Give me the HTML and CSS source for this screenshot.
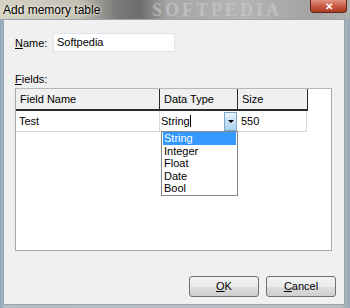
FILE: index.html
```html
<!DOCTYPE html>
<html>
<head>
    <meta http-equiv="Content-Type" content="text/html; charset=UTF-8">
    <link rel="stylesheet" href="styles.css">
</head>
<body>
    <div class="window">
        <div class="titlebar">
            <span class="title">Add memory table</span>
            <span class="watermark">SOFTPEDIA</span>
            <span class="close">&#x2715;</span>
        </div>

        <div class="client">
            <div class="name-row">
                <label class="label"><u>N</u>ame:</label>
                <div class="textbox">Softpedia</div>
            </div>

            <div class="fields-label"><u>F</u>ields:</div>

            <div class="grid">
                <div class="grid-header">
                    <div class="cell col-name">Field Name</div>
                    <div class="cell col-type">Data Type</div>
                    <div class="cell col-size">Size</div>
                </div>
                <div class="grid-row">
                    <div class="cell col-name">Test</div>
                    <div class="cell col-type combo">
                        <span class="combo-text">String<span class="caret"></span></span>
                        <span class="combo-button"><span class="arrow"></span></span>
                    </div>
                    <div class="cell col-size">550</div>
                </div>

                <ul class="dropdown">
                    <li class="selected">String</li>
                    <li>Integer</li>
                    <li>Float</li>
                    <li>Date</li>
                    <li>Bool</li>
                </ul>
            </div>

            <div class="buttons">
                <div class="button"><u>O</u>K</div>
                <div class="button"><u>C</u>ancel</div>
            </div>
        </div>
    </div>
</body>
</html>
```

FILE: styles.css
```css
body {
    margin: 0;
    font-family: "Liberation Sans", Arial, sans-serif;
    font-size: 11px;
    color: #000;
}

.window {
    width: 350px;
    height: 308px;
    display: flex;
    flex-direction: column;
    background: linear-gradient(to right, #8fa3b8 0px, #b4bcc4 4px, #b8bcc0 340px, #9aa8b8 350px);
}

.titlebar {
    position: relative;
    height: 19px;
    display: flex;
    align-items: flex-start;
    background: linear-gradient(to right, #d6d2c6 0%, #c4c0b4 22%, #7c7c7a 33%, #6c6c6c 40%, #a6a6a4 48%, #b4b4b2 70%, #a4a4a4 88%, #b0b0b0 100%);
}

.title {
    padding: 3px 0 0 3px;
    font-size: 12px;
    color: #000;
    text-shadow: 0 0 4px #f0f0e8, 0 0 2px #f0f0e8;
}

.watermark {
    position: absolute;
    left: 152px;
    top: 1px;
    font-family: "Liberation Serif", serif;
    font-weight: bold;
    font-size: 18px;
    line-height: 18px;
    letter-spacing: 3px;
    color: #cfcfcf;
    opacity: 0.55;
}

.close {
    position: absolute;
    left: 310px;
    top: 0;
    width: 37px;
    height: 13px;
    border: 1px solid #5a2a20;
    border-top: none;
    border-radius: 0 0 4px 4px;
    background: linear-gradient(#e29482, #c85a44 50%, #b03a22);
    color: #fff;
    font-size: 10px;
    font-weight: bold;
    line-height: 13px;
    text-align: center;
    box-sizing: border-box;
}

.client {
    flex: 1;
    margin: 0 5px 3px 3px;
    background: #f0f0f0;
    border: 1px solid #9aa2aa;
    display: flex;
    flex-direction: column;
    padding: 13px 0 0 11px;
}

.name-row {
    display: flex;
    align-items: center;
    height: 19px;
}

.label {
    width: 38px;
}

.textbox {
    width: 122px;
    height: 19px;
    box-sizing: border-box;
    background: #fff;
    border: 1px solid #e2e3ea;
    padding: 2px 0 0 3px;
}

.fields-label {
    margin-top: 21px;
    height: 15px;
}

.grid {
    position: relative;
    width: 317px;
    height: 163px;
    box-sizing: border-box;
    background: #fff;
    border: 1px solid #a8a8a8;
    border-top-color: #b8b8b8;
}

.grid-header {
    display: flex;
    height: 22px;
    box-sizing: border-box;
    width: 292px;
    background: #f0f0f0;
    border-bottom: 2px solid #2a2a2a;
}

.grid-header .cell {
    border-right: 1px solid #2a2a2a;
    padding: 4px 0 0 4px;
}

.grid-row {
    display: flex;
    height: 21px;
    box-sizing: border-box;
    width: 291px;
    border-bottom: 1px solid #d8d8d8;
    border-right: 1px solid #d8d8d8;
}

.grid-row .cell {
    padding: 4px 0 0 3px;
}

.cell {
    box-sizing: border-box;
}

.col-name {
    width: 144px;
}

.col-type {
    width: 78px;
}

.col-size {
    flex: 1;
}

.grid-row .col-name {
    border-right: 1px solid #d8d8d8;
}

.combo {
    display: flex;
    justify-content: space-between;
    padding: 0 !important;
}

.combo-text {
    padding: 4px 0 0 1px;
}

.caret {
    display: inline-block;
    width: 1px;
    height: 12px;
    background: #000;
    vertical-align: -2px;
}

.combo-button {
    width: 13px;
    height: 19px;
    margin: 1px 1px 0 0;
    box-sizing: border-box;
    border: 1px solid #7aa6cc;
    background: linear-gradient(#eaf5fc, #c6e2f4 50%, #aad4ee);
    display: flex;
    align-items: center;
    justify-content: center;
}

.arrow {
    width: 0;
    height: 0;
    border-left: 3px solid transparent;
    border-right: 3px solid transparent;
    border-top: 3px solid #000;
}

.dropdown {
    position: absolute;
    left: 145px;
    top: 42px;
    width: 77px;
    margin: 0;
    padding: 0 1px;
    list-style: none;
    background: #fff;
    border: 1px solid #828790;
    box-sizing: border-box;
}

.dropdown li {
    height: 12.6px;
    line-height: 12px;
    padding-left: 1px;
}

.dropdown li.selected {
    background: #3399ff;
    color: #fff;
}

.buttons {
    display: flex;
    justify-content: flex-end;
    gap: 7px;
    margin: auto 8px 7px 0;
}

.button {
    width: 70px;
    height: 21px;
    box-sizing: border-box;
    border: 1px solid #707070;
    border-radius: 3px;
    background: linear-gradient(#f2f2f2, #ebebeb 50%, #dddddd 51%, #cfcfcf);
    text-align: center;
    line-height: 19px;
}
```
